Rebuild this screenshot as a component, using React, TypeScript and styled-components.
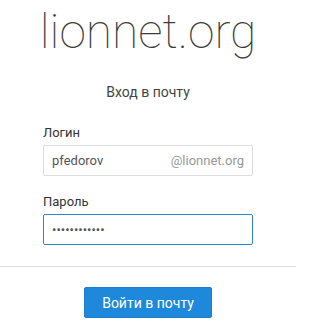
import React from "react";
import styled, { createGlobalStyle } from "styled-components";

const GlobalStyle = createGlobalStyle`
  html, body {
    margin: 0;
    padding: 0;
    background: #ffffff;
    overflow: hidden;
  }
  body {
    font-family: Roboto, "Noto Sans", sans-serif;
    color: #333;
  }
`;

const Page = styled.div`
  width: 296px;
  height: 330px;
  display: flex;
  flex-direction: column;
  align-items: center;
  overflow: hidden;
`;

const Logo = styled.div`
  margin-top: 2px;
  font-family: Roboto, sans-serif;
  font-weight: 100;
  font-size: 48px;
  line-height: 60px;
  color: #3b3b3b;
`;

const Subtitle = styled.div`
  margin-top: 21px;
  font-size: 14px;
  font-weight: 400;
  color: #444;
  line-height: 18px;
`;

const Form = styled.form`
  width: 210px;
  margin-top: 24px;
  display: flex;
  flex-direction: column;
`;

const Label = styled.label`
  font-size: 13px;
  line-height: 16px;
  color: #333;
  margin-bottom: 4px;
`;

const Field = styled.div<{ $focused?: boolean }>`
  box-sizing: border-box;
  height: 31px;
  display: flex;
  align-items: center;
  padding: 0 8px;
  border: 1px solid ${(p) => (p.$focused ? "#2f86c4" : "#dcdcdc")};
  border-radius: 2px;
  margin-bottom: 18px;
  background: #fff;

  &:last-child {
    margin-bottom: 14px;
  }
`;

const Input = styled.input`
  flex: 1;
  min-width: 0;
  border: none;
  outline: none;
  padding: 0;
  font-family: Roboto, sans-serif;
  font-size: 13px;
  color: #555;
  background: transparent;
`;

const Domain = styled.span`
  font-size: 13px;
  color: #999;
`;

const Divider = styled.hr`
  align-self: stretch;
  margin: 7px 0 0;
  border: none;
  border-top: 1px solid #dedede;
`;

const Button = styled.button`
  margin-top: 20px;
  width: 128px;
  height: 31px;
  border: 1px solid #1b7fcc;
  border-radius: 2px;
  background: #1e88da;
  color: #fff;
  font-family: Roboto, sans-serif;
  font-size: 14px;
  cursor: pointer;
`;

export default function App() {
  return (
    <>
      <GlobalStyle />
      <Page>
        <Logo>lionnet.org</Logo>
        <Subtitle>Вход в почту</Subtitle>
        <Form onSubmit={(e) => e.preventDefault()}>
          <Label>Логин</Label>
          <Field>
            <Input defaultValue="pfedorov" />
            <Domain>@lionnet.org</Domain>
          </Field>
          <Label>Пароль</Label>
          <Field $focused>
            <Input type="password" defaultValue="••••••••••••" />
          </Field>
        </Form>
        <Divider />
        <Button>Войти в почту</Button>
      </Page>
    </>
  );
}
